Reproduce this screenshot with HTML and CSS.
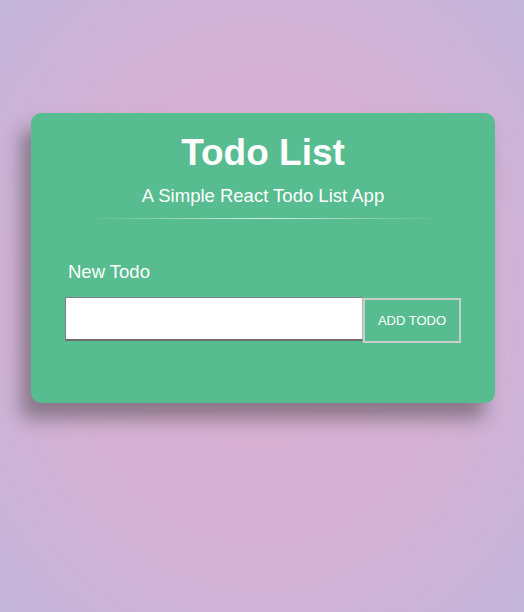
FILE: index.html
```html
<!DOCTYPE html>
<html lang="en">
<head>
<meta charset="utf-8">
<title>Todo List</title>
<link rel="stylesheet" href="styles.css">
</head>
<body>
  <main class="card">
    <h1 class="title">Todo List</h1>
    <p class="subtitle">A Simple React Todo List App</p>
    <hr class="divider">
    <form class="todo-form">
      <label class="label" for="new-todo">New Todo</label>
      <div class="row">
        <input class="todo-input" id="new-todo" type="text">
        <button class="add-btn" type="button">ADD TODO</button>
      </div>
    </form>
  </main>
</body>
</html>
```
FILE: styles.css
```css
html, body {
  margin: 0;
  padding: 0;
}
body {
  width: 524px;
  height: 612px;
  overflow: hidden;
  font-family: "Liberation Sans", Arial, sans-serif;
  background: radial-gradient(ellipse at 50% 50%, #dbafd1 0%, #d4b1d3 55%, #c3b5da 100%);
  padding-top: 113px;
  box-sizing: border-box;
}
.card {
  width: 464px;
  margin-left: 31px;
  box-sizing: border-box;
  padding: 19px 34px 60px;
  background: #57bc90;
  border-radius: 10px;
  box-shadow: -10px 16px 18px rgba(40, 40, 40, 0.42);
  color: #fff;
}
.title {
  margin: 0;
  font-size: 37px;
  line-height: 41px;
  font-weight: bold;
  text-align: center;
}
.subtitle {
  margin: 12px 0 0;
  font-size: 18.5px;
  line-height: 21px;
  text-align: center;
}
.divider {
  width: 352px;
  height: 1px;
  margin: 12px auto 0;
  border: 0;
  background: linear-gradient(to right, rgba(255,255,255,0), rgba(255,255,255,0.75) 50%, rgba(255,255,255,0));
}
.todo-form {
  margin-top: 42px;
}
.label {
  display: block;
  font-size: 18.5px;
  line-height: 21px;
  padding-left: 3px;
}
.row {
  display: flex;
  align-items: flex-start;
  margin-top: 15px;
}
.todo-input {
  width: 298px;
  height: 44px;
  box-sizing: border-box;
  margin: 0;
  padding: 0 6px;
  background: #fff;
  border-style: solid;
  border-width: 1px 1px 2px 1px;
  border-color: #7c7c7c #b5b5b5 #6e6e6e #7c7c7c;
  border-radius: 0;
  font-family: inherit;
  font-size: 16px;
  outline: none;
}
.add-btn {
  width: 98px;
  height: 45px;
  margin: 1px 0 0;
  box-sizing: border-box;
  background: transparent;
  border: 2px solid #c9cfcb;
  color: #fff;
  font-family: inherit;
  font-size: 13px;
  padding: 0;
  cursor: pointer;
}
```
